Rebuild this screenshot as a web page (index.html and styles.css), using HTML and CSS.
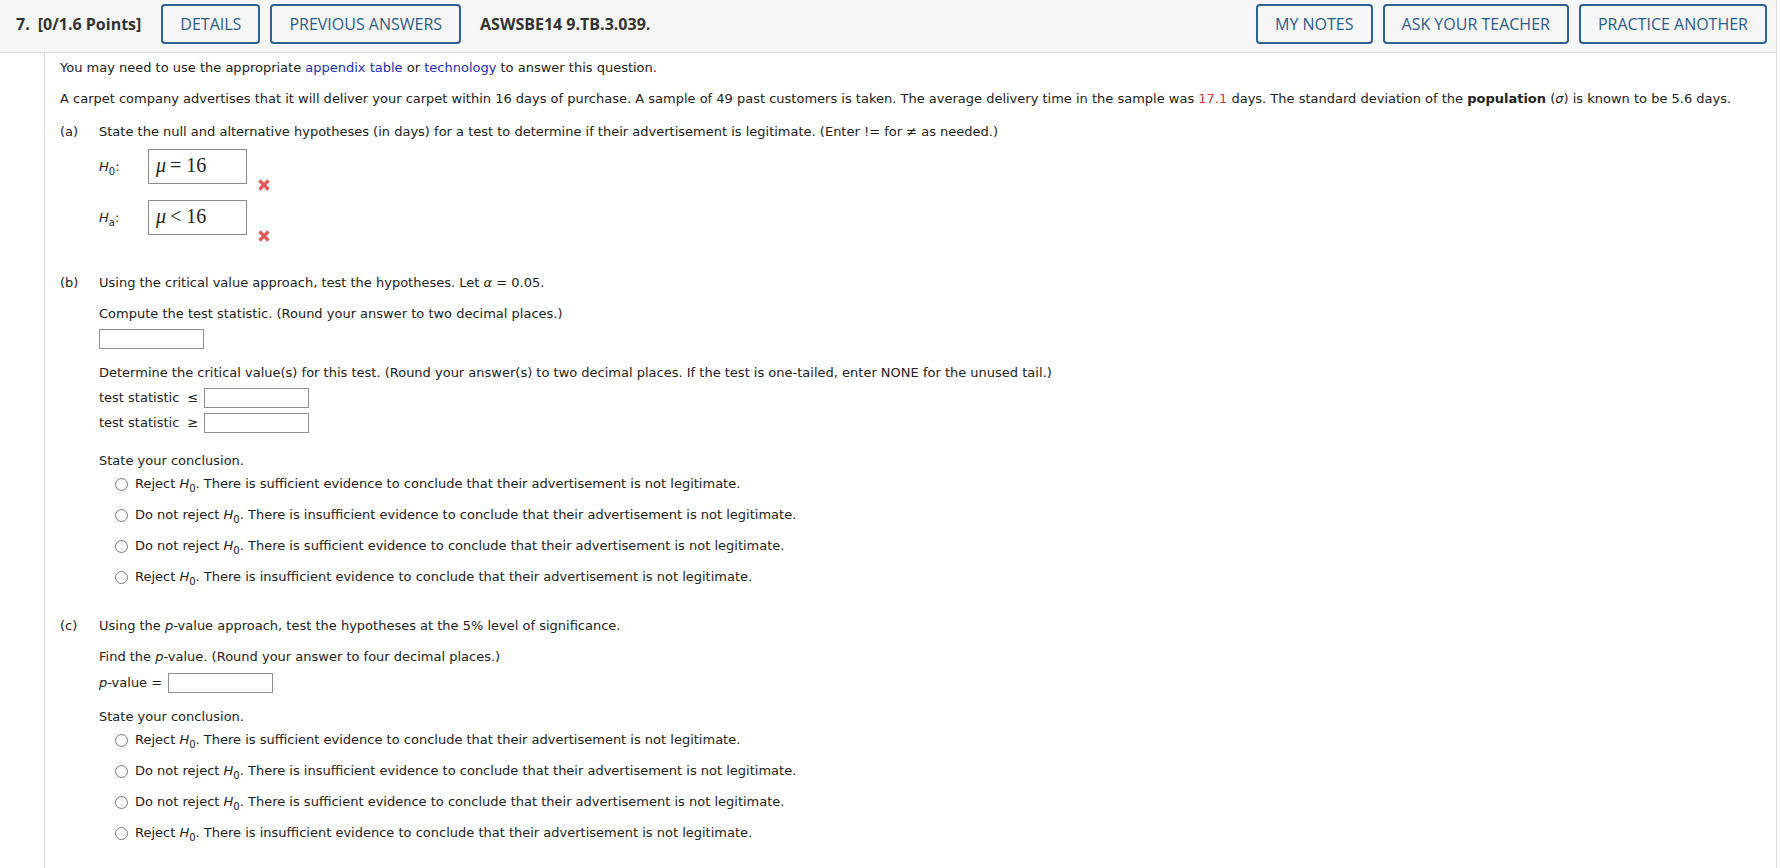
FILE: index.html
```html
<!DOCTYPE html>
<html lang="en">
<head>
  <meta charset="UTF-8">
  <title>Question 7</title>
  <link rel="stylesheet" href="styles.css">
</head>
<body>
  <div class="question">
    <div class="q-header">
      <span class="q-num">7.</span>
      <span class="q-points">[0/1.6 Points]</span>
      <a class="btn" href="#">DETAILS</a>
      <a class="btn" href="#">PREVIOUS ANSWERS</a>
      <span class="q-code">ASWSBE14 9.TB.3.039.</span>
      <div class="spacer"></div>
      <a class="btn" href="#">MY NOTES</a>
      <a class="btn" href="#">ASK YOUR TEACHER</a>
      <a class="btn" href="#">PRACTICE ANOTHER</a>
    </div>

    <div class="q-body">
      <p class="intro">You may need to use the appropriate <a href="#">appendix table</a> or <a href="#">technology</a> to answer this question.</p>
      <p class="intro">A carpet company advertises that it will deliver your carpet within 16 days of purchase. A sample of 49 past customers is taken. The average delivery time in the sample was <span class="val">17.1</span> days. The standard deviation of the <b>population</b> (<i>σ</i>) is known to be 5.6 days.</p>

      <div class="part part-a">
        <span class="part-label">(a)</span>
        <div class="part-body">
          <p>State the null and alternative hypotheses (in days) for a test to determine if their advertisement is legitimate. (Enter != for ≠ as needed.)</p>
          <div class="hyp">
            <span class="hyp-label"><i>H</i><sub>0</sub>:</span>
            <span class="math-box"><i>μ</i><span class="op">=</span>16</span>
            <svg class="wrong" width="12" height="12" viewBox="0 0 12 12"><path d="M1.5 1.5 L10.5 10.5 M10.5 1.5 L1.5 10.5"/></svg>
          </div>
          <div class="hyp">
            <span class="hyp-label"><i>H</i><sub>a</sub>:</span>
            <span class="math-box"><i>μ</i><span class="op">&lt;</span>16</span>
            <svg class="wrong" width="12" height="12" viewBox="0 0 12 12"><path d="M1.5 1.5 L10.5 10.5 M10.5 1.5 L1.5 10.5"/></svg>
          </div>
        </div>
      </div>

      <div class="part part-b">
        <span class="part-label">(b)</span>
        <div class="part-body">
          <p>Using the critical value approach, test the hypotheses. Let <i>α</i> = 0.05.</p>
          <p class="sub">Compute the test statistic. (Round your answer to two decimal places.)</p>
          <span class="answer"></span>
          <p class="sub sub-gap">Determine the critical value(s) for this test. (Round your answer(s) to two decimal places. If the test is one-tailed, enter NONE for the unused tail.)</p>
          <div class="ans-row first"><span class="ans-label">test statistic&nbsp; ≤</span><span class="answer"></span></div>
          <div class="ans-row"><span class="ans-label">test statistic&nbsp; ≥</span><span class="answer"></span></div>
          <p class="sub conclusion">State your conclusion.</p>
          <ul class="choices">
            <li><span class="radio"></span><span>Reject <i>H</i><sub>0</sub>. There is sufficient evidence to conclude that their advertisement is not legitimate.</span></li>
            <li><span class="radio"></span><span>Do not reject <i>H</i><sub>0</sub>. There is insufficient evidence to conclude that their advertisement is not legitimate.</span></li>
            <li><span class="radio"></span><span>Do not reject <i>H</i><sub>0</sub>. There is sufficient evidence to conclude that their advertisement is not legitimate.</span></li>
            <li><span class="radio"></span><span>Reject <i>H</i><sub>0</sub>. There is insufficient evidence to conclude that their advertisement is not legitimate.</span></li>
          </ul>
        </div>
      </div>

      <div class="part part-c">
        <span class="part-label">(c)</span>
        <div class="part-body">
          <p>Using the <i>p</i>-value approach, test the hypotheses at the 5% level of significance.</p>
          <p class="sub">Find the <i>p</i>-value. (Round your answer to four decimal places.)</p>
          <div class="ans-row pval"><span class="ans-label"><i>p</i>-value =</span><span class="answer"></span></div>
          <p class="sub conclusion-c">State your conclusion.</p>
          <ul class="choices">
            <li><span class="radio"></span><span>Reject <i>H</i><sub>0</sub>. There is sufficient evidence to conclude that their advertisement is not legitimate.</span></li>
            <li><span class="radio"></span><span>Do not reject <i>H</i><sub>0</sub>. There is insufficient evidence to conclude that their advertisement is not legitimate.</span></li>
            <li><span class="radio"></span><span>Do not reject <i>H</i><sub>0</sub>. There is sufficient evidence to conclude that their advertisement is not legitimate.</span></li>
            <li><span class="radio"></span><span>Reject <i>H</i><sub>0</sub>. There is insufficient evidence to conclude that their advertisement is not legitimate.</span></li>
          </ul>
        </div>
      </div>
    </div>
  </div>
</body>
</html>
```

FILE: styles.css
```css
:root {
  --btn-blue: #2e6194;
  --text: #222;
  --rule: #dcdcdc;
}

* {
  box-sizing: border-box;
  margin: 0;
  padding: 0;
}

body {
  background: #fff;
  color: var(--text);
  font-family: "DejaVu Sans", Verdana, sans-serif;
  font-size: 13px;
  line-height: 20px;
}

.question {
  width: 1777px;
  min-height: 868px;
  border-right: 1px solid var(--rule);
}

/* header bar */
.q-header {
  display: flex;
  align-items: center;
  padding: 4px 9px 8px 16px;
  background: #f6f6f6;
  border-bottom: 1px solid var(--rule);
  font-family: "Open Sans", sans-serif;
  font-size: 16px;
  color: #333;
}

.q-num {
  font-weight: 700;
  margin-right: 8px;
}

.q-points {
  font-weight: 700;
  margin-right: 20px;
}

.q-code {
  font-weight: 700;
  margin-left: 9px;
}

.spacer {
  flex: 1;
}

.btn {
  display: flex;
  align-items: center;
  height: 40px;
  padding: 0 17px;
  margin-right: 10px;
  border: 2px solid var(--btn-blue);
  border-radius: 4px;
  color: #2b5b8b;
  text-decoration: none;
}

.btn:last-child {
  margin-right: 0;
}

/* question body */
.q-body {
  margin-left: 44px;
  border-left: 1px solid var(--rule);
  padding: 5px 0 40px 15px;
  min-height: 815px;
}

.intro {
  margin-bottom: 11px;
}

.intro + .intro {
  margin-bottom: 13px;
}

a {
  color: #1b2fb8;
  text-decoration: none;
}

.val {
  color: #c43b3b;
}

.part {
  display: flex;
}

.part-label {
  width: 39px;
  flex-shrink: 0;
}

.part-body {
  flex: 1;
}

sub {
  font-size: 10px;
  vertical-align: -4px;
  line-height: 0;
}

/* hypotheses */
.hyp {
  display: flex;
  align-items: center;
  margin-top: 7px;
}

.hyp + .hyp {
  margin-top: 16px;
}

.hyp-label {
  width: 49px;
}

.math-box {
  display: inline-block;
  width: 99px;
  height: 35px;
  padding: 0 0 0 7px;
  border: 1px solid #8c8c8c;
  font-family: "Liberation Serif", serif;
  font-size: 20px;
  line-height: 31px;
}

.math-box .op {
  margin: 0 5px 0 4px;
}

.wrong {
  align-self: flex-end;
  margin: 0 0 -7px 11px;
}

.wrong path {
  stroke: #e25a5a;
  stroke-width: 3.2;
  fill: none;
}

.part-b {
  margin-top: 38px;
}

.sub {
  margin-top: 11px;
}

.sub-gap {
  margin-top: 14px;
}

.answer {
  display: block;
  width: 105px;
  height: 20px;
  margin-top: 5px;
  border: 1px solid #8f8f8f;
  background: #fff;
}

.ans-row {
  display: flex;
  align-items: center;
  margin-top: 5px;
}

.ans-row .answer {
  margin-top: 0;
}

.ans-label {
  width: 105px;
}

.pval {
  margin-top: 6px;
}

.pval .ans-label {
  width: 69px;
}

.conclusion {
  margin-top: 18px;
}

.conclusion-c {
  margin-top: 14px;
}

.choices {
  list-style: none;
  padding-left: 16px;
  margin-top: 3px;
}

.choices li {
  display: flex;
  align-items: center;
  margin-bottom: 11px;
}

.radio {
  width: 13px;
  height: 13px;
  margin-right: 7px;
  border: 1px solid #7a7a7a;
  border-radius: 50%;
  background: #fff;
  flex-shrink: 0;
}

.part-c {
  margin-top: 18px;
}
```
